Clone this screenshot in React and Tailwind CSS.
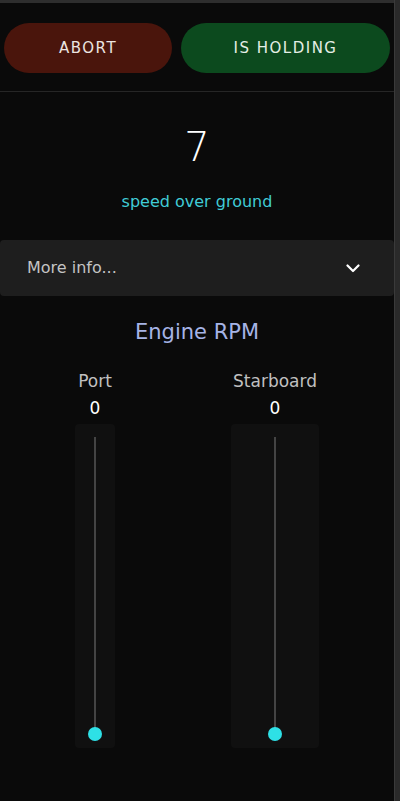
import React from "react";

const font = { fontFamily: '"DejaVu Sans", "Liberation Sans", sans-serif' };

function Slider({ width }) {
  return (
    <div className={`relative h-[324px] ${width} bg-[#101010] rounded-sm flex justify-center`}>
      <div className="absolute top-[13px] bottom-[14px] w-[2px] bg-[#444444]" />
      <div className="absolute bottom-[7px] w-[14px] h-[14px] rounded-full bg-[#2ee0e6]" />
    </div>
  );
}

export default function App() {
  return (
    <div className="w-[400px] h-[801px] bg-[#0a0a0a] flex overflow-hidden" style={font}>
      <div className="flex-1 flex flex-col border-t-[3px] border-[#2e2e2e]">
        <div className="flex gap-[9px] px-[4px] pt-[20px] pb-[18px] border-b border-[#262626]">
          <button className="w-[168px] h-[50px] rounded-full bg-[#4a150c] text-[#ece4e0] text-[15px] font-normal tracking-[1.5px]">
            ABORT
          </button>
          <button className="flex-1 h-[50px] rounded-full bg-[#0c4a1e] text-[#e4eee5] text-[15px] font-normal tracking-[1.5px]">
            IS HOLDING
          </button>
        </div>
        <div className="flex flex-col items-center pt-[31px]">
          <div className="text-[40px] leading-[48px] text-white font-light">7</div>
          <div className="mt-[20px] text-[16px] leading-[22px] text-[#40ccd6] font-normal">speed over ground</div>
        </div>
        <div className="mt-[27px] h-[56px] bg-[#1e1e1e] rounded-[4px] flex items-center justify-between pl-[27px] pr-[34px]">
          <span className="text-[16px] text-[#c4c4c4] font-normal">More info...</span>
          <svg width="14" height="9" viewBox="0 0 14 9" fill="none">
            <path d="M1.5 1.5 L7 7 L12.5 1.5" stroke="white" strokeWidth="2.2" strokeLinecap="round" strokeLinejoin="round" />
          </svg>
        </div>
        <div className="mt-[22px] text-center text-[21px] leading-[28px] text-[#a6b4e6] font-normal">Engine RPM</div>
        <div className="mt-[24px] flex justify-center gap-[116px]">
          <div className="flex flex-col items-center w-[40px]">
            <div className="text-[17px] leading-[22px] text-[#c0c0c0] font-normal">Port</div>
            <div className="mt-[5px] text-[17px] leading-[22px] text-white font-normal">0</div>
            <div className="mt-[5px]">
              <Slider width="w-[40px]" />
            </div>
          </div>
          <div className="flex flex-col items-center w-[88px]">
            <div className="text-[17px] leading-[22px] text-[#c0c0c0] font-normal whitespace-nowrap">Starboard</div>
            <div className="mt-[5px] text-[17px] leading-[22px] text-white font-normal">0</div>
            <div className="mt-[5px]">
              <Slider width="w-[88px]" />
            </div>
          </div>
        </div>
      </div>
      <div className="w-[6px] h-full bg-[#2a2a2a] border-l border-[#3a3a3a]" />
    </div>
  );
}
